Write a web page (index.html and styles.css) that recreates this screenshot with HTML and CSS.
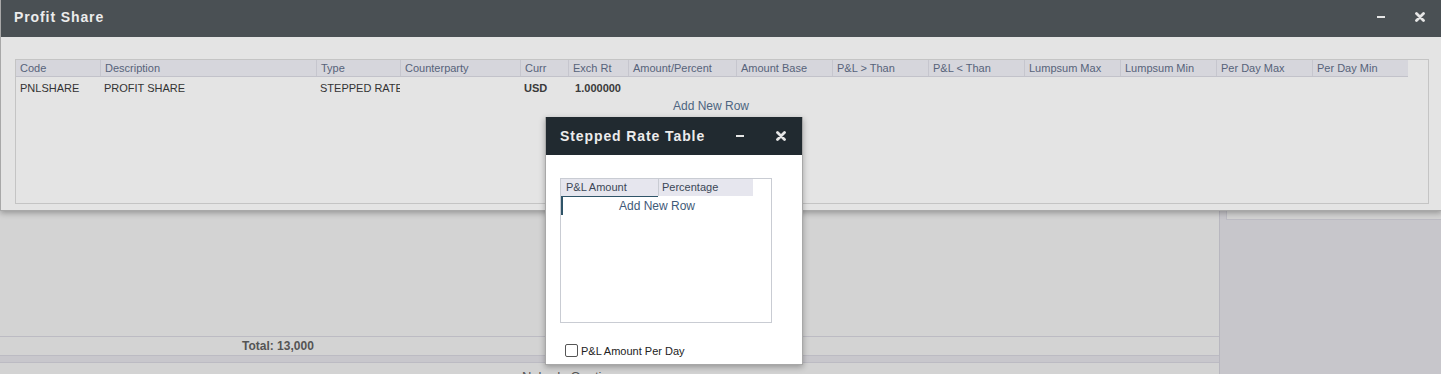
FILE: index.html
```html
<!DOCTYPE html>
<html lang="en">
<head>
  <meta charset="UTF-8"/>
  <title>Profit Share</title>
  <link rel="stylesheet" href="styles.css">
</head>
<body>

  <div class="page">
    <!-- Workspace behind the dialogs -->
    <div class="workspace">
      <div class="main">
        <div class="main-fill"></div>
        <div class="total-row"><span class="total">Total: 13,000</span></div>
        <div class="band"></div>
        <div class="status">Nobody Quoting</div>
      </div>
      <aside class="side">
        <div class="side-box"></div>
      </aside>
    </div>

    <!-- Profit Share dialog -->
    <div class="dialog profit">
      <div class="dialog-head">
        <span class="dialog-title">Profit Share</span>
        <div class="dialog-tools">
          <svg class="tool" width="10" height="10" viewBox="0 0 10 10"><rect x="1" y="4" width="8" height="2" fill="currentColor"/></svg>
          <svg class="tool" width="10" height="10" viewBox="0 0 10 10"><path d="M1.5 1.5 L8.5 8.5 M8.5 1.5 L1.5 8.5" stroke="currentColor" stroke-width="2.8" stroke-linecap="round"/></svg>
        </div>
      </div>
      <div class="profit-body">
        <div class="grid-box">
          <div class="grid-row grid-head">
            <div>Code</div><div>Description</div><div>Type</div><div>Counterparty</div>
            <div>Curr</div><div>Exch Rt</div><div>Amount/Percent</div><div>Amount Base</div>
            <div>P&amp;L &gt; Than</div><div>P&amp;L &lt; Than</div><div>Lumpsum Max</div>
            <div>Lumpsum Min</div><div>Per Day Max</div><div>Per Day Min</div>
          </div>
          <div class="grid-row grid-data">
            <div>PNLSHARE</div><div>PROFIT SHARE</div><div>STEPPED RATE</div><div></div>
            <div class="strong">USD</div><div class="strong num">1.000000</div><div></div><div></div>
            <div></div><div></div><div></div><div></div><div></div><div></div>
          </div>
          <div class="add-row">Add New Row</div>
        </div>
      </div>
    </div>

    <!-- Stepped Rate Table dialog -->
    <div class="dialog stepped">
      <div class="dialog-head">
        <span class="dialog-title">Stepped Rate Table</span>
        <div class="dialog-tools">
          <svg class="tool" width="10" height="10" viewBox="0 0 10 10"><rect x="1" y="4" width="8" height="2" fill="currentColor"/></svg>
          <svg class="tool" width="10" height="10" viewBox="0 0 10 10"><path d="M1.5 1.5 L8.5 8.5 M8.5 1.5 L1.5 8.5" stroke="currentColor" stroke-width="2.8" stroke-linecap="round"/></svg>
        </div>
      </div>
      <div class="stepped-body">
        <div class="rate-box">
          <div class="rate-head">
            <div>P&amp;L Amount</div><div>Percentage</div>
          </div>
          <div class="rate-add">
            <span class="rate-focus"></span>
            Add New Row
          </div>
        </div>
        <label class="check">
          <span class="check-box"></span>
          P&amp;L Amount Per Day
        </label>
      </div>
    </div>
  </div>

</body>
</html>
```
FILE: styles.css
```css
* { margin:0; padding:0; box-sizing:border-box }
html, body { width:100%; height:100%; overflow:hidden }
body {
  font-family: "Liberation Sans", Arial, sans-serif;
  font-size: 11px;
  color: #333;
  background: #d3d3d3;
}

.page { position:relative; height:374px; overflow:hidden }

/* Workspace */
.workspace {
  display:grid;
  grid-template-columns: 1219px 1fr;
  height:100%;
}
.main { display:flex; flex-direction:column }
.main-fill { height:336px; flex:none }
.total-row {
  height:19px;
  border-top:1px solid #bcbbc3;
  padding-left:242px;
  display:flex; align-items:center;
}
.total { font-weight:bold; font-size:12px; color:#555 }
.band {
  height:8px;
  background:#c8c7cc;
  border-top:1px solid #bcbbc3;
  border-bottom:1px solid #bcbbc3;
}
.status {
  padding:6px 0 0 522px;
  font-size:13px;
  color:#555;
}

.side {
  background:#c7c6cb;
  border-left:1px solid #b8b7bf;
  padding-left:6px;
}
.side-box {
  height:220px;
  background:#d3d3d3;
  border-left:1px solid #bcbbc3;
  border-bottom:1px solid #bcbbc3;
}

/* Dialogs */
.dialog {
  position:absolute;
  box-shadow:0 2px 6px rgba(0,0,0,0.3);
  border:1px solid #a8a8a8;
  border-top:none;
}
.dialog-head {
  display:flex; align-items:center; justify-content:space-between;
  height:37px;
  color:#ececec;
}
.dialog-title {
  font-size:14px;
  font-weight:bold;
  letter-spacing:0.9px;
}
.dialog-tools { display:flex; align-items:center }
.tool { display:block; color:#e6e6e6 }

/* Profit Share */
.profit {
  top:0; left:0; width:1442px; height:211px;
  background:#e4e4e4;
}
.profit .dialog-head {
  background:#4a5054;
  padding:0 16px 3px 13px;
}
.profit .dialog-tools { gap:29px }
.profit-body { padding:22px 12px 0 14px }
.grid-box {
  height:145px;
  border:1px solid #c4c4c4;
}
.grid-row {
  display:grid;
  grid-template-columns: 84px 216px 84px 120px 48px 60px 108px repeat(7, 96px);
  width:1392px;
}
.grid-row > div {
  padding:0 4px;
  white-space:nowrap;
  overflow:hidden;
}
.grid-head {
  height:17px;
  background:#d6d6dc;
  border-bottom:1px solid #c2c2ca;
  color:#56637a;
  line-height:16px;
}
.grid-head > div + div { border-left:1px solid #c6c6ce }
.grid-data { height:23px; line-height:22px; color:#333 }
.grid-data .strong { font-weight:bold; color:#3a3a3a }
.grid-data .num { text-align:right; padding-right:7px }
.add-row {
  text-align:center;
  font-size:12px;
  color:#4d6480;
  padding-right:22px;
  line-height:12px;
}

/* Stepped Rate Table */
.stepped {
  top:117px; left:545px; width:258px; height:248px;
  background:#fff;
}
.stepped .dialog-head {
  background:#212a30;
  height:38px;
  padding:0 16px 0 14px;
}
.stepped .dialog-tools { gap:31px }
.stepped-body { padding:23px 30px 0 14px }
.rate-box {
  height:145px;
  border:1px solid #c9ccd3;
}
.rate-head {
  display:grid;
  grid-template-columns: 97px 95px;
  width:192px;
  height:17px;
  background:#e6e6ee;
  color:#3b4656;
  line-height:16px;
}
.rate-head > div { padding-left:5px; white-space:nowrap }
.rate-head > div + div { border-left:1px solid #c9ccd3; padding-left:3px }
.rate-add {
  position:relative;
  width:192px;
  height:19px;
  line-height:21px;
  text-align:center;
  font-size:12px;
  color:#3f5a78;
}
.rate-focus {
  position:absolute; left:0; top:0;
  width:97px; height:19px;
  border-left:2px solid #2f5468;
  border-top:1px solid #2f5468;
}
.check {
  display:flex; align-items:center; gap:3px;
  margin:21px 0 0 5px;
  font-size:11px;
  color:#222;
}
.check-box {
  width:13px; height:13px;
  border:1px solid #555;
  border-radius:2px;
  background:#fff;
}
```
